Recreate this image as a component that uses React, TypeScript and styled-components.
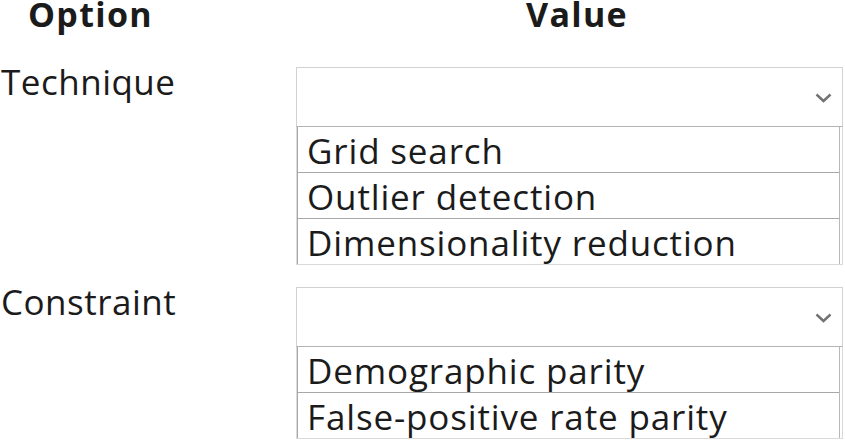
import React from 'react';
import styled, { createGlobalStyle } from 'styled-components';

const GlobalStyle = createGlobalStyle`
  html, body {
    margin: 0;
    padding: 0;
    background: #ffffff;
  }
  body {
    font-family: 'Open Sans', 'Noto Sans', sans-serif;
    color: #1b1b1b;
  }
`;

type Field = {
  label: string;
  options: string[];
};

const fields: Field[] = [
  {
    label: 'Technique',
    options: ['Grid search', 'Outlier detection', 'Dimensionality reduction'],
  },
  {
    label: 'Constraint',
    options: ['Demographic parity', 'False-positive rate parity'],
  },
];

const App = () => {
  return (
    <>
      <GlobalStyle />
      <Page>
        <HeaderRow>
          <OptionHead>Option</OptionHead>
          <ValueHead>Value</ValueHead>
        </HeaderRow>
        {fields.map((f) => (
          <FieldRow key={f.label}>
            <Label>{f.label}</Label>
            <ValueCol>
              <Select>
                <Chevron viewBox="0 0 17 10">
                  <path d="M1.5 1.5 L8.5 8 L15.5 1.5" />
                </Chevron>
              </Select>
              <OptionList>
                <OptionRows>
                  {f.options.map((o) => (
                    <OptionRow key={o}>{o}</OptionRow>
                  ))}
                </OptionRows>
              </OptionList>
            </ValueCol>
          </FieldRow>
        ))}
      </Page>
    </>
  );
};

export default App;

// 전체 페이지
const Page = styled.div`
  display: flex;
  flex-direction: column;
  gap: 22px;
  width: 845px;
`;

const HeaderRow = styled.div`
  display: flex;
  height: 67px;
  margin-bottom: -22px;
  font-weight: 700;
  font-size: 34px;
  line-height: 34px;
  letter-spacing: 1.3px;
`;

const OptionHead = styled.div`
  width: 296px;
  padding-left: 28px;
  box-sizing: border-box;
  margin-top: -3px;
`;

const ValueHead = styled.div`
  width: 547px;
  text-align: center;
  padding-left: 15px;
  box-sizing: border-box;
  margin-top: -3px;
`;

const FieldRow = styled.div`
  display: flex;
`;

const Label = styled.div`
  width: 296px;
  font-size: 35px;
  line-height: 30px;
  letter-spacing: 0.5px;
  padding-left: 1px;
  box-sizing: border-box;
`;

const ValueCol = styled.div`
  width: 547px;
  display: flex;
  flex-direction: column;
`;

// 드롭다운 박스
const Select = styled.div`
  position: relative;
  height: 58px;
  border: 1px solid #d2d2d2;
  border-bottom-color: #b4b4b4;
`;

const Chevron = styled.svg`
  position: absolute;
  right: 10px;
  top: 25px;
  width: 17px;
  height: 10px;
  fill: none;
  stroke: #727272;
  stroke-width: 2.4;
`;

const OptionList = styled.div`
  border: 1px solid #dadada;
  border-top: none;
  padding: 0 2px 0 0;
`;

const OptionRows = styled.div`
  border-left: 1px solid #a8a8a8;
  border-right: 1px solid #b8b8b8;
`;

const OptionRow = styled.div`
  font-size: 35px;
  line-height: 40px;
  letter-spacing: 0.85px;
  padding: 4px 0 1px 9px;
  border-bottom: 1px solid #a8a8a8;
  &:last-child {
    border-bottom: none;
  }
`;
